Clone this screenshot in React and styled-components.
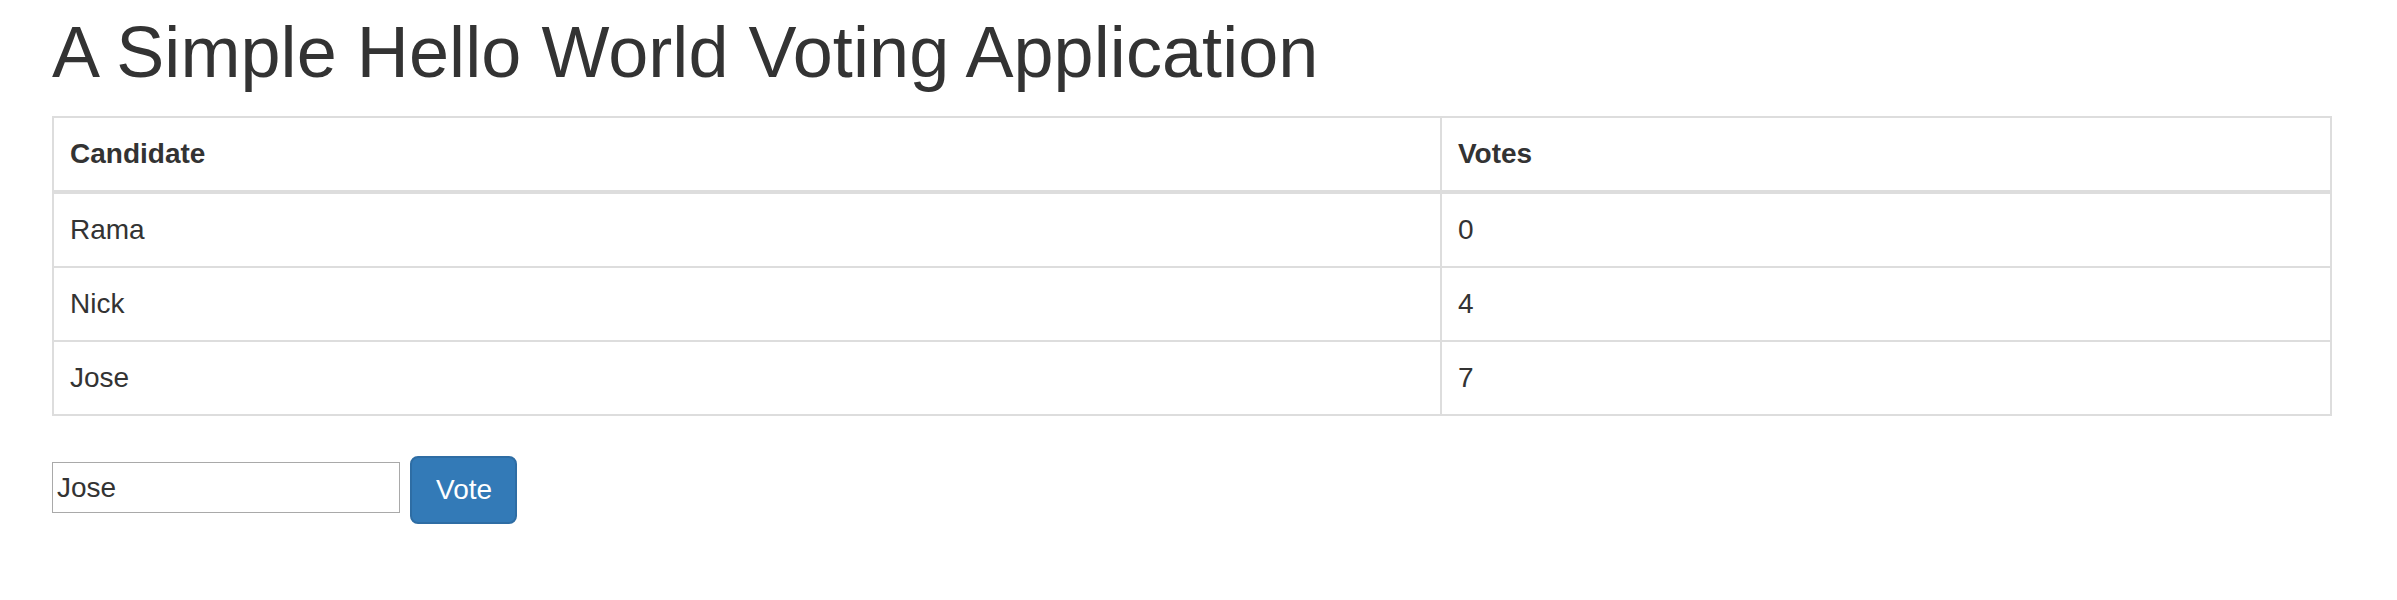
import { useState } from "react"
import styled, { createGlobalStyle } from "styled-components"

const GlobalStyle = createGlobalStyle`
    * {
        box-sizing: border-box;
    }
    body {
        margin: 0;
        background-color: #fff;
        color: #333;
        font-family: "Liberation Sans", Arial, sans-serif;
        font-size: 28px;
        line-height: 40px;
    }
`

const candidates = [
    { name: 'Rama', votes: 0 },
    { name: 'Nick', votes: 4 },
    { name: 'Jose', votes: 7 },
]

export default function App() {
    const [name, setName] = useState('Jose')

    return (
        <>
            <GlobalStyle />
            <Container>
                <Title>A Simple Hello World Voting Application</Title>
                <Table>
                    <thead>
                        <tr>
                            <Th $first>Candidate</Th>
                            <Th>Votes</Th>
                        </tr>
                    </thead>
                    <tbody>
                        {candidates.map(c => (
                            <tr key={c.name}>
                                <Td $first>{c.name}</Td>
                                <Td>{c.votes}</Td>
                            </tr>
                        ))}
                    </tbody>
                </Table>
                <Form>
                    <Input value={name} onChange={e => setName(e.target.value)} />
                    <Button>Vote</Button>
                </Form>
            </Container>
        </>
    )
}

const Container = styled.div`
    padding: 0 65px 0 52px;
`

const Title = styled.h1`
    font-size: 72px;
    font-weight: 500;
    line-height: 1.1;
    letter-spacing: 0.08px;
    margin: 13px 0 24px;
`

const Table = styled.table`
    width: 100%;
    border-collapse: collapse;
    border-spacing: 0;
    border: 2px solid #ddd;
    margin-bottom: 40px;
`

const Th = styled.th`
    text-align: left;
    font-weight: bold;
    padding: 16px;
    border: 2px solid #ddd;
    border-bottom-width: 4px;
    width: ${(props) => props.$first ? '1388px' : 'auto'};
`

const Td = styled.td`
    padding: 16px;
    border: 2px solid #ddd;
    width: ${(props) => props.$first ? '1388px' : 'auto'};
`

const Form = styled.div`
    display: flex;
    align-items: flex-start;
    gap: 10px;
`

const Input = styled.input`
    width: 348px;
    height: 51px;
    margin-top: 6px;
    padding: 0 4px;
    border: 1px solid #a9a9a9;
    font-family: "Liberation Sans", Arial, sans-serif;
    font-size: 28px;
    color: #333;
    outline: none;
`

const Button = styled.button`
    width: 107px;
    height: 68px;
    padding: 12px 24px;
    background-color: #337ab7;
    border: 2px solid #2e6da4;
    border-radius: 8px;
    color: #fff;
    font-family: "Liberation Sans", Arial, sans-serif;
    font-size: 28px;
    line-height: 40px;
    cursor: pointer;
`
